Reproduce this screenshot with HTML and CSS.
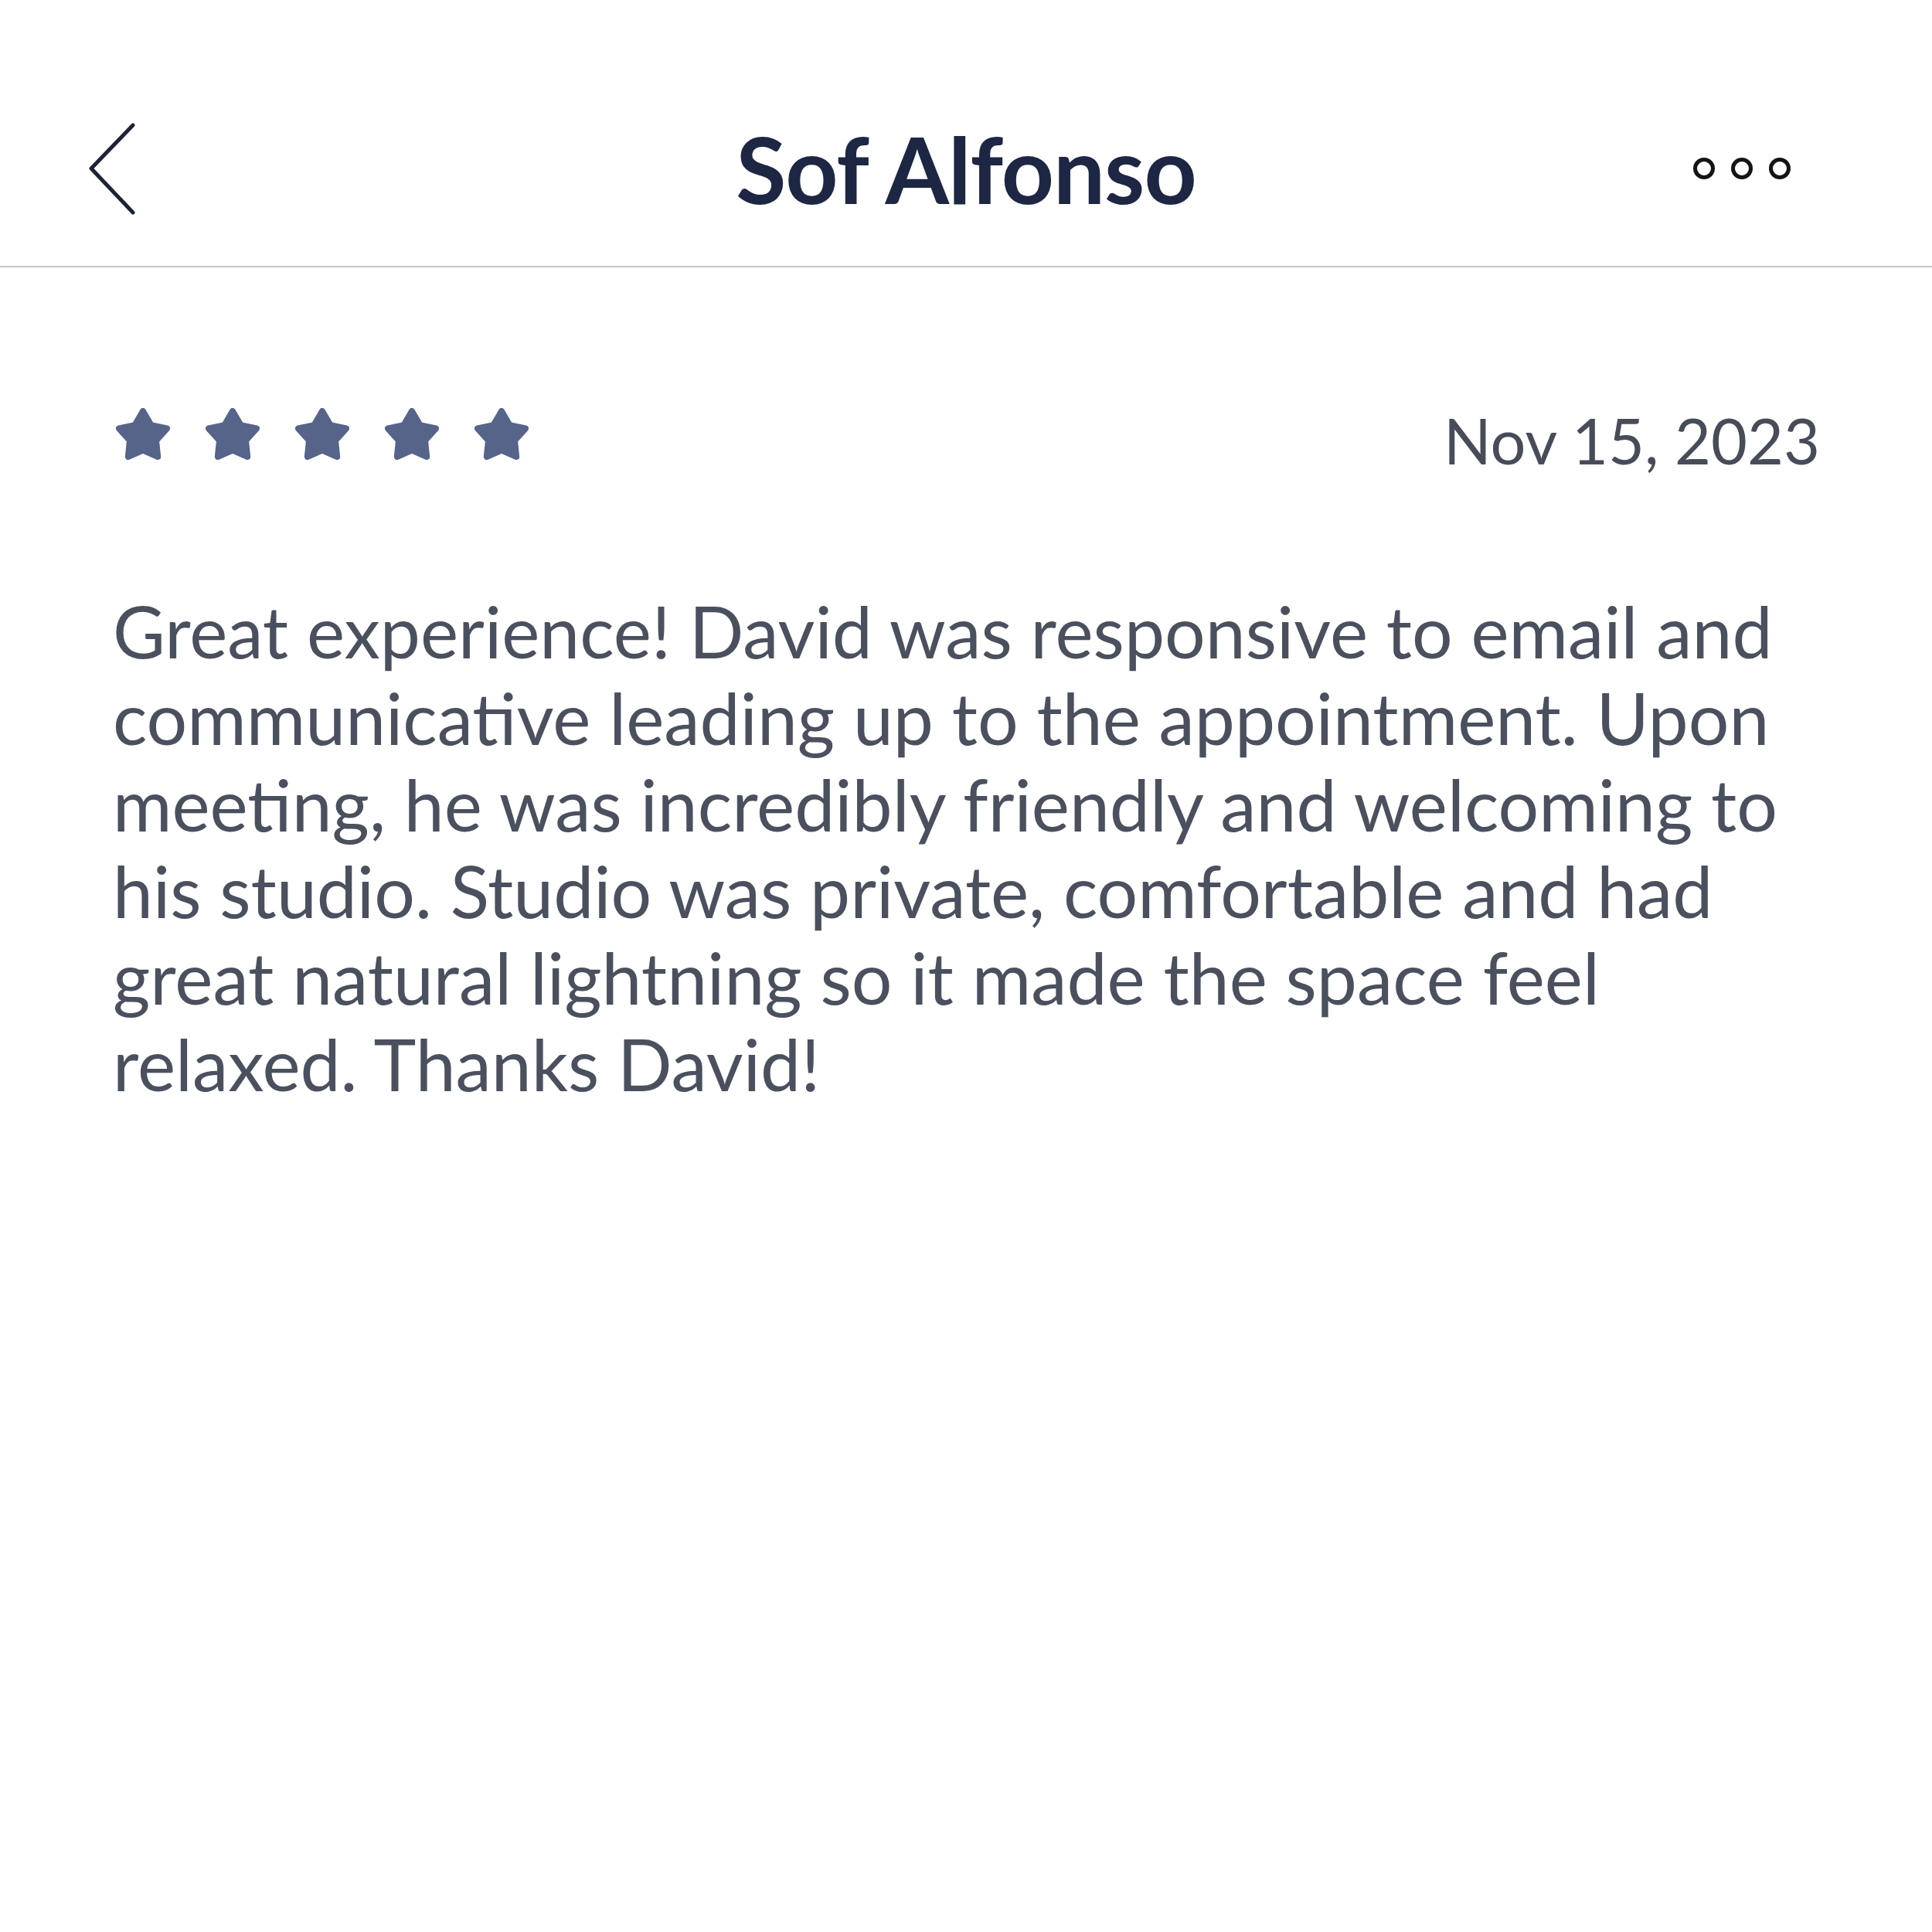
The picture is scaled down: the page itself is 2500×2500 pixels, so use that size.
FILE: index.html
```html
<!DOCTYPE html>
<html lang="en">
<head>
<meta charset="utf-8">
<title>Sof Alfonso</title>
<link rel="stylesheet" href="styles.css">
</head>
<body>
<div class="screen">
  <header class="topbar">
    <div class="back">
      <svg width="70" height="125" viewBox="0 0 70 125"><path d="M62 6 L8 62 L62 119" fill="none" stroke="#1e2235" stroke-width="5" stroke-linecap="round" stroke-linejoin="round"/></svg>
    </div>
    <h1 class="title">Sof Alfonso</h1>
    <div class="more">
      <svg width="132" height="34" viewBox="0 0 132 34"><g fill="none" stroke="#141414" stroke-width="5"><circle cx="17" cy="17" r="11.5"/><circle cx="66" cy="17" r="11.5"/><circle cx="115" cy="17" r="11.5"/></g></svg>
    </div>
  </header>
  <main class="review">
    <div class="meta">
      <div class="stars">
        <svg class="star" width="70" height="68" viewBox="0 0 70 68"><polygon points="35,4 45.5,22.1 66,26.5 52,42.1 54.2,63 35,54.5 15.8,63 18,42.1 4,26.5 24.5,22.1"/></svg>
        <svg class="star" width="70" height="68" viewBox="0 0 70 68"><polygon points="35,4 45.5,22.1 66,26.5 52,42.1 54.2,63 35,54.5 15.8,63 18,42.1 4,26.5 24.5,22.1"/></svg>
        <svg class="star" width="70" height="68" viewBox="0 0 70 68"><polygon points="35,4 45.5,22.1 66,26.5 52,42.1 54.2,63 35,54.5 15.8,63 18,42.1 4,26.5 24.5,22.1"/></svg>
        <svg class="star" width="70" height="68" viewBox="0 0 70 68"><polygon points="35,4 45.5,22.1 66,26.5 52,42.1 54.2,63 35,54.5 15.8,63 18,42.1 4,26.5 24.5,22.1"/></svg>
        <svg class="star" width="70" height="68" viewBox="0 0 70 68"><polygon points="35,4 45.5,22.1 66,26.5 52,42.1 54.2,63 35,54.5 15.8,63 18,42.1 4,26.5 24.5,22.1"/></svg>
      </div>
      <div class="date">Nov 15, 2023</div>
    </div>
    <p class="text">Great experience! David was responsive to email and communicative leading up to the appointment. Upon meeting, he was incredibly friendly and welcoming to his studio. Studio was private, comfortable and had great natural lightning so it made the space feel relaxed. Thanks David!</p>
  </main>
</div>
</body>
</html>
```

FILE: styles.css
```css
html, body {
  margin: 0;
  padding: 0;
  background: #ffffff;
}

.screen {
  width: 2500px;
  height: 2500px;
  background: #ffffff;
  font-family: Lato, "Open Sans", "Liberation Sans", sans-serif;
}

.topbar {
  display: grid;
  grid-template-columns: 1fr auto 1fr;
  align-items: center;
  height: 196px;
  padding: 120px 110px 28px 110px;
  border-bottom: 2px solid #c6c6c8;
}

.back {
  display: flex;
  align-items: center;
}

.back svg {
  display: block;
}

.title {
  margin: 0;
  font-size: 119px;
  font-weight: 700;
  color: #1d2643;
  line-height: 1.2;
  letter-spacing: -1px;
}

.more {
  display: flex;
  justify-content: flex-end;
  padding-right: 70px;
}

.more svg {
  display: block;
}

.review {
  padding: 175px 145px 0 146px;
}

.meta {
  display: flex;
  justify-content: space-between;
  align-items: flex-start;
}

.stars {
  display: flex;
  gap: 46px;
  padding-top: 7px;
  padding-left: 4px;
}

.star {
  display: block;
  fill: #56648a;
  stroke: #56648a;
  stroke-width: 8;
  stroke-linejoin: round;
}

.date {
  font-size: 81px;
  line-height: 1.2;
  color: #474c59;
}

.text {
  margin: 142px 0 0 0;
  font-size: 93px;
  line-height: 112px;
  color: #4a505e;
}
```
